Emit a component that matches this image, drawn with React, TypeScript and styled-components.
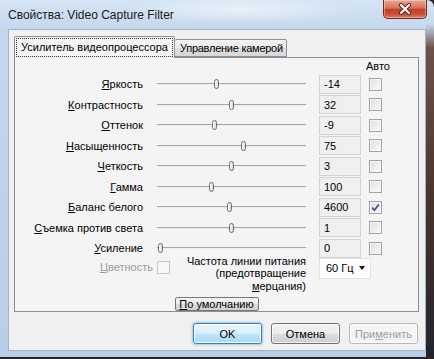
import styled, { createGlobalStyle } from "styled-components";

type Setting = {
  label: string;
  value: string;
  thumb: number;
  auto?: boolean;
};

const settings: Setting[] = [
  { label: "Яркость", value: "-14", thumb: 59 },
  { label: "Контрастность", value: "32", thumb: 74 },
  { label: "Оттенок", value: "-9", thumb: 57 },
  { label: "Насыщенность", value: "75", thumb: 86 },
  { label: "Четкость", value: "3", thumb: 74 },
  { label: "Гамма", value: "100", thumb: 54 },
  { label: "Баланс белого", value: "4600", thumb: 72, auto: true },
  { label: "Съемка против света", value: "1", thumb: 74 },
  { label: "Усиление", value: "0", thumb: 3 },
];

const GlobalStyle = createGlobalStyle`
  html, body {
    margin: 0;
    padding: 0;
  }

  body {
    width: 434px;
    height: 359px;
    overflow: hidden;
    background: #2a2428;
    font-family: "Liberation Sans", Arial, sans-serif;
    font-size: 11px;
    color: #000;
  }
`;

const Window = styled.div`
  width: 434px;
  height: 357px;
  box-sizing: border-box;
  padding: 0 8px 6px 8px;

  display: flex;
  flex-direction: column;

  border-top-right-radius: 7px;
  background:
    linear-gradient(180deg, rgba(0, 0, 0, 0) 0, rgba(0, 0, 0, 0) 24px, #6e5249 48px, #4a342c 55%, #23232d 100%) right top / 8px 100% no-repeat,
    radial-gradient(ellipse 120px 14px at 240px 10px, rgba(255, 255, 255, 0.55), rgba(255, 255, 255, 0)),
    linear-gradient(180deg, #d4e4f4 0, #c4d8ed 29px, #b8cee6 100%);
`;

const TitleBar = styled.div`
  height: 29px;
  flex-shrink: 0;

  display: flex;
  justify-content: space-between;
  align-items: flex-start;
`;

const TitleText = styled.div`
  padding-top: 8px;

  font-size: 12px;
  line-height: 15px;
  color: #1a1a1a;
`;

const CloseButton = styled.div`
  width: 44px;
  height: 19px;
  margin-right: -1px;
  box-sizing: border-box;

  display: flex;
  justify-content: center;
  align-items: center;

  border: 1px solid #6a2b22;
  border-top: none;
  border-radius: 0 0 5px 5px;
  background: linear-gradient(180deg, #e9a697 0%, #d9725c 45%, #c23f28 52%, #cb4d33 78%, #de7c60 100%);
  box-shadow: inset 0 0 0 1px rgba(255, 255, 255, 0.35);
`;

const Client = styled.div`
  flex: 1;
  padding: 6px 6px 0 5px;

  display: flex;
  flex-direction: column;

  border: 1px solid #9fb4c9;
  background: #f0f0f0;
`;

const TabStrip = styled.div`
  height: 21px;

  display: flex;
  align-items: flex-end;
`;

const Tab = styled.div<{ $active?: boolean }>`
  position: relative;
  z-index: ${(p) => (p.$active ? 1 : 0)};
  height: ${(p) => (p.$active ? "22px" : "18px")};
  margin-bottom: ${(p) => (p.$active ? "-1px" : "0")};
  padding: ${(p) => (p.$active ? "2px 2px 3px 2px" : "0 3px 0 5px")};
  box-sizing: border-box;

  display: flex;
  align-items: center;

  border: 1px solid #8c8f95;
  border-bottom: ${(p) => (p.$active ? "none" : "1px solid #8c8f95")};
  border-left: ${(p) => (p.$active ? "1px solid #8c8f95" : "none")};
  border-radius: 2px 2px 0 0;
  background: ${(p) =>
    p.$active ? "#f4f4f4" : "linear-gradient(180deg, #f3f3f3 0%, #ebebeb 50%, #dedede 51%, #d8d8d8 100%)"};

  letter-spacing: ${(p) => (p.$active ? "0" : "-0.25px")};
  white-space: nowrap;
`;

const FocusBox = styled.span`
  padding: 2px 4px 2px 4px;
  line-height: 13px;

  outline: 1px dotted #333;
  outline-offset: 0;
`;

const Panel = styled.div`
  height: 255px;
  box-sizing: border-box;

  display: flex;
  flex-direction: column;

  border: 1px solid #8c8f95;
  background: #f4f4f4;
`;

const AutoHeader = styled.div`
  height: 16px;
  padding-right: 28px;

  display: flex;
  justify-content: flex-end;
  align-items: center;
`;

const Row = styled.div`
  height: 20.5px;

  display: flex;
  align-items: center;
`;

const Label = styled.div<{ $disabled?: boolean }>`
  width: 128px;
  flex-shrink: 0;

  text-align: right;
  white-space: nowrap;
  color: ${(p) => (p.$disabled ? "#9a9a9a" : "#000")};
`;

const Accel = styled.span`
  text-decoration: underline;
  text-underline-offset: 1px;
`;

const Slider = styled.div`
  position: relative;
  width: 149px;
  height: 12px;
  margin-left: 14px;
  flex-shrink: 0;

  display: flex;
  align-items: center;
`;

const Track = styled.div`
  width: 100%;
  height: 2px;
  box-sizing: border-box;

  border-top: 1px solid #a5a7aa;
  border-bottom: 1px solid #ececec;
`;

const Thumb = styled.div`
  position: absolute;
  top: 1px;
  width: 5px;
  height: 10px;
  box-sizing: border-box;

  border: 1px solid #6e6e6e;
  border-radius: 3px;
  background: linear-gradient(90deg, #ffffff, #d6d6d6);
`;

const ValueBox = styled.div`
  width: 42px;
  height: 19px;
  margin-left: 13px;
  padding-left: 4px;
  box-sizing: border-box;
  flex-shrink: 0;

  display: flex;
  align-items: center;

  border: 1px solid #d3d3d3;
  background: #efefef;
`;

const CheckBox = styled.div<{ $disabled?: boolean }>`
  width: 13px;
  height: 13px;
  margin-left: ${(p) => (p.$disabled ? "4px" : "8px")};
  box-sizing: border-box;
  flex-shrink: 0;

  display: flex;
  justify-content: center;
  align-items: center;

  border: 1px solid ${(p) => (p.$disabled ? "#c6c6c6" : "#a3a3a3")};
  background: ${(p) => (p.$disabled ? "#f7f7f7" : "linear-gradient(135deg, #dedede, #fbfbfb)")};
  box-shadow: inset 0 0 0 1px #f6f6f6;
`;

const ExtraRow = styled.div`
  height: 38px;
  margin-top: -4px;

  display: flex;
  align-items: flex-start;
`;

const ColorGroup = styled.div`
  width: 155px;
  margin-top: 6px;
  flex-shrink: 0;

  display: flex;
  justify-content: flex-end;
  align-items: center;
`;

const FreqText = styled.div`
  width: 136px;
  flex-shrink: 0;

  text-align: right;
  line-height: 12.5px;
`;

const Dropdown = styled.div`
  width: 52px;
  height: 21px;
  margin-top: 3px;
  margin-left: 13px;
  padding: 0 5px 0 6px;
  box-sizing: border-box;

  display: flex;
  justify-content: space-between;
  align-items: center;

  border: 1px solid #e2e2e2;
  background: #ffffff;
`;

const Arrow = styled.span`
  width: 0;
  height: 0;

  border-left: 3.5px solid transparent;
  border-right: 3.5px solid transparent;
  border-top: 4px solid #111;
`;

const DefaultButton = styled.div`
  width: 84px;
  height: 14px;
  margin-top: 4px;
  align-self: center;
  box-sizing: border-box;

  display: flex;
  justify-content: center;
  align-items: center;

  border: 1px solid #777;
  border-radius: 2px;
  background: linear-gradient(180deg, #f4f4f4 0%, #ebebeb 50%, #dcdcdc 51%, #d2d2d2 100%);

  line-height: 12px;
`;

const ButtonRow = styled.div`
  margin-top: 11px;
  margin-right: 1px;

  display: flex;
  justify-content: flex-end;
  gap: 9px;
`;

const DialogButton = styled.div<{ $variant?: "default" | "disabled" }>`
  width: 69px;
  height: 21px;
  box-sizing: border-box;

  display: flex;
  justify-content: center;
  align-items: center;

  border: 1px solid
    ${(p) => (p.$variant === "default" ? "#3c7fb1" : p.$variant === "disabled" ? "#b5b9bc" : "#707070")};
  border-radius: 3px;
  background: ${(p) =>
    p.$variant === "default"
      ? "linear-gradient(180deg, #eaf6fd 0%, #d9f0fc 50%, #bee6fd 51%, #a7d9f5 100%)"
      : p.$variant === "disabled"
        ? "#f4f4f4"
        : "linear-gradient(180deg, #f2f2f2 0%, #ebebeb 50%, #dddddd 51%, #cfcfcf 100%)"};
  box-shadow: ${(p) =>
    p.$variant === "default"
      ? "0 0 2px 1px rgba(120, 190, 235, 0.7), inset 0 0 0 1px #fff"
      : "inset 0 0 0 1px rgba(255,255,255,0.7)"};

  font-weight: 400;
  color: ${(p) => (p.$variant === "disabled" ? "#9c9c9c" : "#000")};
`;

const accel = (text: string, index = 0) => (
  <>
    {text.slice(0, index)}
    <Accel>{text[index]}</Accel>
    {text.slice(index + 1)}
  </>
);

const CheckMark = () => (
  <svg width="9" height="9" viewBox="0 0 9 9">
    <path d="M1.2 4.6 L3.4 7.2 L7.8 1.4" fill="none" stroke="#34508e" strokeWidth="1.7" />
  </svg>
);

const CloseGlyph = () => (
  <svg width="14" height="12" viewBox="0 0 14 12">
    <path d="M3 2 L11 10 M11 2 L3 10" stroke="#5a1d14" strokeWidth="4" strokeLinecap="round" />
    <path d="M3 2 L11 10 M11 2 L3 10" stroke="#ffffff" strokeWidth="2.2" strokeLinecap="round" />
  </svg>
);

const App = () => {
  return (
    <>
      <GlobalStyle />
      <Window>
        <TitleBar>
          <TitleText>Свойства: Video Capture Filter</TitleText>
          <CloseButton>
            <CloseGlyph />
          </CloseButton>
        </TitleBar>
        <Client>
          <TabStrip>
            <Tab $active>
              <FocusBox>Усилитель видеопроцессора</FocusBox>
            </Tab>
            <Tab>Управление камерой</Tab>
          </TabStrip>
          <Panel>
            <AutoHeader>Авто</AutoHeader>
            {settings.map((s) => (
              <Row key={s.label}>
                <Label>{accel(s.label)}</Label>
                <Slider>
                  <Track />
                  <Thumb style={{ left: s.thumb - 2.5 }} />
                </Slider>
                <ValueBox>{s.value}</ValueBox>
                <CheckBox>{s.auto && <CheckMark />}</CheckBox>
              </Row>
            ))}
            <ExtraRow>
              <ColorGroup>
                <Label as="span" $disabled style={{ width: "auto" }}>
                  {accel("Цветность")}
                </Label>
                <CheckBox $disabled />
              </ColorGroup>
              <FreqText>
                Частота линии питания
                <br />
                (предотвращение
                <br />
                {accel("мерцания)")}
              </FreqText>
              <Dropdown>
                <span>60 Гц</span>
                <Arrow />
              </Dropdown>
            </ExtraRow>
            <DefaultButton>{accel("По умолчанию")}</DefaultButton>
          </Panel>
          <ButtonRow>
            <DialogButton $variant="default">OK</DialogButton>
            <DialogButton>Отмена</DialogButton>
            <DialogButton $variant="disabled">{accel("Применить", 3)}</DialogButton>
          </ButtonRow>
        </Client>
      </Window>
    </>
  );
};

export default App;
